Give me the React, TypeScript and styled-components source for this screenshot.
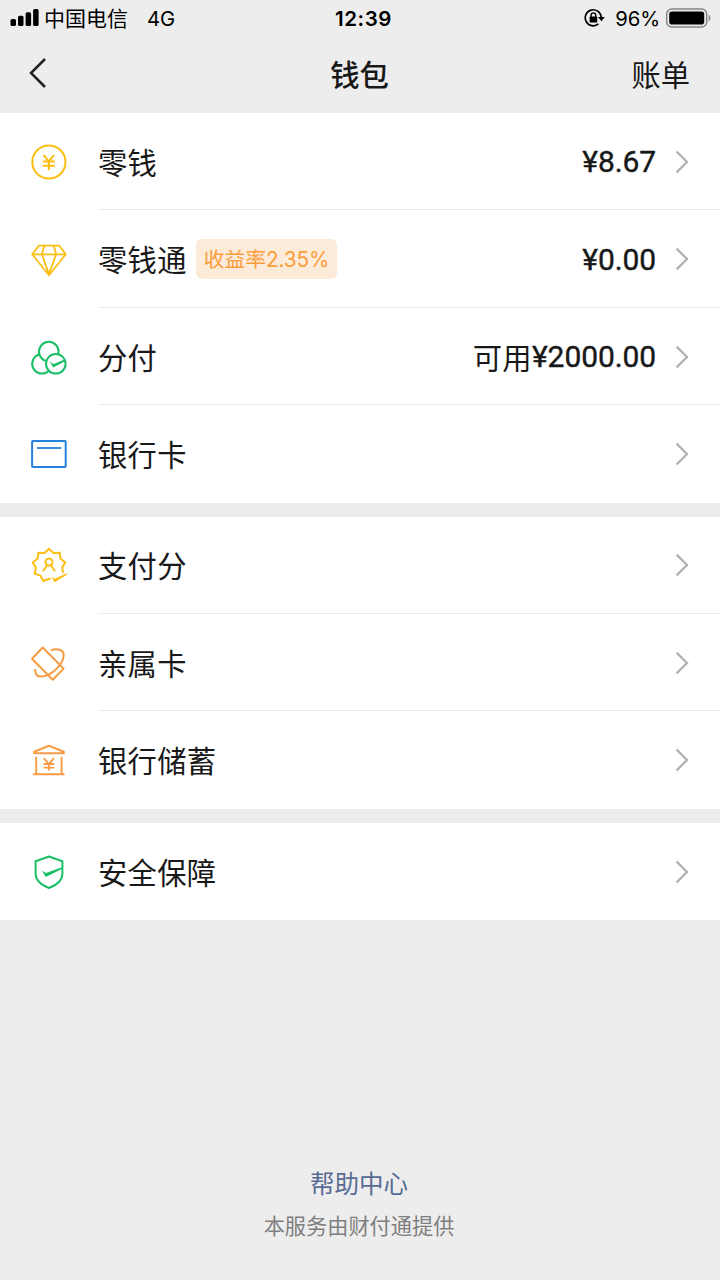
import React from "react";
import styled, { createGlobalStyle } from "styled-components";

const GlobalStyle = createGlobalStyle`
  * { box-sizing: border-box; }
  html, body { margin: 0; padding: 0; background: #ededed; }
  body { font-family: "Noto Sans CJK SC", sans-serif; color: #181818; }
  svg { display: block; flex: none; }
`;

const Page = styled.main`
  width: 720px;
  height: 1280px;
  display: flex;
  flex-direction: column;
  background: #ededed;
  overflow: hidden;
`;

const StatusBar = styled.div`
  height: 36px;
  flex: none;
  display: grid;
  grid-template-columns: 1fr auto 1fr;
  align-items: center;
  padding: 0 9px 0 10px;
  color: #000;
  font-family: Inter, "Noto Sans CJK SC", sans-serif;
  font-size: 20.3px;
  line-height: 34px;
`;

const StatusGroup = styled.div<{ $end?: boolean }>`
  height: 35px;
  display: flex;
  align-items: center;
  justify-content: ${(p) => (p.$end ? "flex-end" : "flex-start")};
`;

const Carrier = styled.span`
  font-family: "Noto Sans CJK SC", sans-serif;
  font-size: 21px;
  line-height: 32px;
  padding-bottom: 2px;
  margin-left: 5px;
`;

const Network = styled.span`
  margin-left: 19px;
  padding-top: 2px;
`;

const Clock = styled.span`
  font-weight: 600;
  font-size: 20.5px;
  letter-spacing: 0.6px;
  margin-left: 6px;
  padding-top: 1px;
`;

const Percent = styled.span`
  margin: 0 5px 0 10px;
  padding-top: 2px;
  letter-spacing: -0.1px;
`;

const NavBar = styled.header`
  height: 77px;
  flex: none;
  display: grid;
  grid-template-columns: 1fr auto 1fr;
  align-items: center;
  padding: 0 30px 3px 28px;
  font-size: 29.3px;
  line-height: 74px;
`;

const Title = styled.h1`
  margin: 0 0 0 1px;
  font-size: 29.3px;
  font-weight: 500;
`;

const Bills = styled.span`
  justify-self: end;
`;

const Group = styled.section`
  background: #fff;
  margin-bottom: 14px;
  flex: none;
`;

const Row = styled.div`
  height: 97.42px;
  display: flex;
  align-items: center;
  padding-left: 29px;
`;

const RowBody = styled.div<{ $divided: boolean }>`
  flex: 1;
  height: 100%;
  margin-left: 29px;
  padding-right: 31px;
  display: flex;
  align-items: center;
  font-size: 29.3px;
  letter-spacing: 0.3px;
  border-bottom: 1px solid ${(p) => (p.$divided ? "#ebebeb" : "transparent")};
`;

const Label = styled.span`
  padding-bottom: 1px;
`;

const Tag = styled.span`
  height: 40px;
  margin-left: 9px;
  padding: 1px 8px 0 8px;
  border-radius: 6px;
  background: #fdebda;
  color: #fa9d3b;
  font-family: Inter, "Noto Sans CJK SC", sans-serif;
  font-size: 20.8px;
  line-height: 40px;
  letter-spacing: -0.1px;
`;

const Amount = styled.span`
  display: flex;
  align-items: center;
  margin-left: auto;
  margin-right: 19px;
`;

const Available = styled.span`
  padding-bottom: 1px;
`;

const Money = styled.span`
  font-family: Roboto, "Noto Sans CJK SC", sans-serif;
  font-size: 30px;
  letter-spacing: -0.1px;
  padding-top: 1px;
  -webkit-text-stroke: 0.4px #181818;
`;

const ChevronSlot = styled.span<{ $alone: boolean }>`
  margin-left: ${(p) => (p.$alone ? "auto" : "0")};
  padding-top: 1px;
`;

const Footer = styled.footer`
  margin-top: auto;
  padding: 0 2px 34px 0;
  display: flex;
  flex-direction: column;
  align-items: center;
`;

const HelpLink = styled.a`
  color: #576b95;
  font-size: 24.5px;
  line-height: 42px;
`;

const Provider = styled.span`
  color: #7f7f7f;
  font-size: 21.2px;
  line-height: 42px;
`;

const YELLOW = "#fcbe12";
const ORANGE = "#f79b45";
const GREEN = "#19bf66";
const BLUE = "#2482dc";

const Glyph = ({ color, children }: { color: string; children: React.ReactNode }) => (
  <svg width="40" height="40" viewBox="0 0 40 40" fill="none" stroke={color} strokeWidth="2" strokeLinejoin="round">
    {children}
  </svg>
);

const CoinIcon = () => (
  <Glyph color={YELLOW}>
    <circle cx="19.9" cy="20" r="16.6" />
    <path d="M14.6 13.2l5.2 6.2 5.2-6.2M19.8 19.4v8.8M13.8 19.6h12.2M13.8 23.8h12.2" />
  </Glyph>
);

const DiamondIcon = () => (
  <Glyph color={YELLOW}>
    <path d="M9.8 6.7h20.4l6.6 8.6L20 36.2 3.2 15.3zM3.2 15.3h33.6M15.2 6.7l-2.4 8.6L20 35l7.2-19.7-2.4-8.6" strokeWidth="1.8" />
  </Glyph>
);

const CirclesIcon = () => (
  <Glyph color={GREEN}>
    <circle cx="13" cy="26.8" r="9.8" />
    <circle cx="19.8" cy="14.6" r="9.8" fill="#fff" />
    <circle cx="26.8" cy="26.8" r="9.8" fill="#fff" />
    <path d="M20.8 24.6l3.8 2.4 11.2-4.6.2 1.8-11.8 6.4z" fill={GREEN} stroke="none" />
  </Glyph>
);

const CardIcon = () => (
  <Glyph color={BLUE}>
    <rect x="3.1" y="7.1" width="33.6" height="26" rx="0.8" />
    <path d="M8 14h24.2" strokeWidth="1.8" />
  </Glyph>
);

const ScoreIcon = () => (
  <Glyph color={YELLOW}>
    <g transform="translate(0 0.6)">
      <path d="M21.5 33.5L20 33.1 14.4 35.3 11.4 30 5.7 28.1 6.9 22.1 3.7 16.9 8.5 13.2 9.4 7.2 15.5 7.3 20 3.3 24.5 7.3 30.6 7.2 31.5 13.2 36.3 16.9 33.1 22.1 34.2 27.2" strokeLinejoin="miter" />
      <circle cx="20" cy="16.4" r="3.5" />
      <path d="M18.2 19.6L14 25.6M21.8 19.6l4.2 6" />
      <path d="M22.4 31.2l3.6 2 11.6-5.6.2 1.6-12.2 7.4z" fill={YELLOW} stroke="none" />
    </g>
  </Glyph>
);

const FamilyIcon = () => (
  <Glyph color={ORANGE}>
    <path d="M13.7 4.5L3 15.8 23.7 36.7 34.6 25.6z" />
    <path d="M21.7 7.3C28 5 34.8 6.5 34.7 12 34.7 18 30 24 24.5 28.5 18 33.6 7.5 36.4 6.4 28.8L6.2 26" />
  </Glyph>
);

const BankIcon = () => (
  <Glyph color={ORANGE}>
    <path d="M5.2 13.3v-1.6L20 5.8l14.8 5.9v1.6z" />
    <path d="M7.2 16.8v17M32.6 16.8v17M4.2 34.2h31.4M14.8 18.2l5.1 6 5.1-6M19.9 24v6.5M14.6 24h10.6M14.6 27.6h10.6" strokeWidth="1.9" />
  </Glyph>
);

const ShieldIcon = () => (
  <Glyph color={GREEN}>
    <path d="M20 4.5l13.4 4.7v12.3c0 7-5.5 11.5-13.4 14.5C12.1 33 6.6 28.5 6.6 21.5V9.2z" />
    <path d="M13 18.6l3.9 2.5 16-5.9v1.9l-16.2 8z" fill={GREEN} stroke="none" />
  </Glyph>
);

const Chevron = () => (
  <svg width="14" height="24" viewBox="0 0 14 24" fill="none" stroke="#b2b2b2" strokeWidth="2.3">
    <path d="M1.6 1.6L12 12 1.6 22.4" />
  </svg>
);

const BackIcon = () => (
  <svg width="20" height="32" viewBox="0 0 20 32" fill="none" stroke="#222" strokeWidth="2.5">
    <path d="M17 2L3 16l14 14" />
  </svg>
);

const SignalIcon = () => (
  <svg width="29" height="20" viewBox="0 0 29 20" fill="#000">
    <rect x="0.5" y="11" width="5.5" height="7" rx="1.6" />
    <rect x="8" y="7.7" width="5.5" height="10.3" rx="1.6" />
    <rect x="15.6" y="4.3" width="5.5" height="13.7" rx="1.6" />
    <rect x="23.1" y="1" width="5.5" height="17" rx="1.6" />
  </svg>
);

const RotationLockIcon = () => (
  <svg width="21" height="20" viewBox="0 0 21 20" fill="none" stroke="#000" strokeWidth="1.7">
    <path d="M14.4 15.9A8 8 0 1 1 17.2 9" />
    <path d="M14 9h6.8l-3.4 4.2z" fill="#000" stroke="none" />
    <rect x="5.6" y="8.6" width="7.6" height="5.8" rx="0.7" fill="#000" stroke="none" />
    <path d="M7.1 9V7.2a2.3 2.3 0 0 1 4.600 0V9" strokeWidth="1.4" />
  </svg>
);

const BatteryIcon = () => (
  <svg width="46" height="20" viewBox="0 0 46 20" fill="none">
    <rect x="1.7" y="1" width="40" height="18" rx="5" stroke="#858585" strokeWidth="1.5" />
    <rect x="4.2" y="3.5" width="35" height="13" rx="2.8" fill="#000" />
    <path d="M43.6 6.8c2.4.8 2.4 5.600 0 6.400z" fill="#858585" />
  </svg>
);

interface Item {
  icon: React.ReactNode;
  label: string;
  tag?: string;
  available?: string;
  amount?: string;
}

const groups: Item[][] = [
  [
    { icon: <CoinIcon />, label: "零钱", amount: "¥8.67" },
    { icon: <DiamondIcon />, label: "零钱通", tag: "收益率2.35%", amount: "¥0.00" },
    { icon: <CirclesIcon />, label: "分付", available: "可用", amount: "¥2000.00" },
    { icon: <CardIcon />, label: "银行卡" },
  ],
  [
    { icon: <ScoreIcon />, label: "支付分" },
    { icon: <FamilyIcon />, label: "亲属卡" },
    { icon: <BankIcon />, label: "银行储蓄" },
  ],
  [{ icon: <ShieldIcon />, label: "安全保障" }],
];

export default function App() {
  return (
    <Page>
      <GlobalStyle />
      <StatusBar>
        <StatusGroup>
          <SignalIcon />
          <Carrier>中国电信</Carrier>
          <Network>4G</Network>
        </StatusGroup>
        <Clock>12:39</Clock>
        <StatusGroup $end>
          <RotationLockIcon />
          <Percent>96%</Percent>
          <BatteryIcon />
        </StatusGroup>
      </StatusBar>
      <NavBar>
        <BackIcon />
        <Title>钱包</Title>
        <Bills>账单</Bills>
      </NavBar>
      {groups.map((items, g) => (
        <Group key={g}>
          {items.map((item, i) => (
            <Row key={item.label}>
              {item.icon}
              <RowBody $divided={i < items.length - 1}>
                <Label>{item.label}</Label>
                {item.tag && <Tag>{item.tag}</Tag>}
                {item.amount && (
                  <Amount>
                    {item.available && <Available>{item.available}</Available>}
                    <Money>{item.amount}</Money>
                  </Amount>
                )}
                <ChevronSlot $alone={!item.amount}>
                  <Chevron />
                </ChevronSlot>
              </RowBody>
            </Row>
          ))}
        </Group>
      ))}
      <Footer>
        <HelpLink>帮助中心</HelpLink>
        <Provider>本服务由财付通提供</Provider>
      </Footer>
    </Page>
  );
}
